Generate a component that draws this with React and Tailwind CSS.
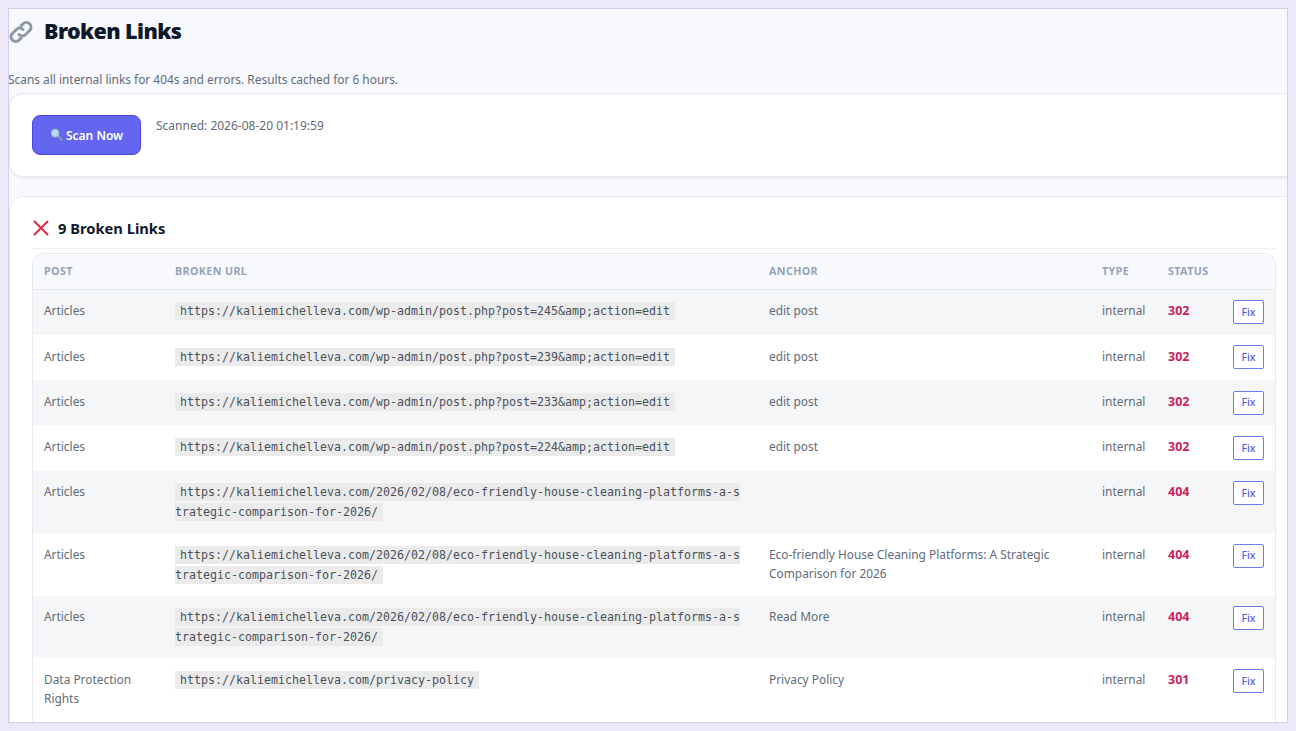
const rows = [
  { post: 'Articles', url: 'https://kaliemichelleva.com/wp-admin/post.php?post=245&amp;action=edit', anchor: 'edit post', status: 302 },
  { post: 'Articles', url: 'https://kaliemichelleva.com/wp-admin/post.php?post=239&amp;action=edit', anchor: 'edit post', status: 302 },
  { post: 'Articles', url: 'https://kaliemichelleva.com/wp-admin/post.php?post=233&amp;action=edit', anchor: 'edit post', status: 302 },
  { post: 'Articles', url: 'https://kaliemichelleva.com/wp-admin/post.php?post=224&amp;action=edit', anchor: 'edit post', status: 302 },
  { post: 'Articles', url: 'https://kaliemichelleva.com/2026/02/08/eco-friendly-house-cleaning-platforms-a-strategic-comparison-for-2026/', anchor: '', status: 404 },
  { post: 'Articles', url: 'https://kaliemichelleva.com/2026/02/08/eco-friendly-house-cleaning-platforms-a-strategic-comparison-for-2026/', anchor: 'Eco-friendly House Cleaning Platforms: A Strategic Comparison for 2026', status: 404 },
  { post: 'Articles', url: 'https://kaliemichelleva.com/2026/02/08/eco-friendly-house-cleaning-platforms-a-strategic-comparison-for-2026/', anchor: 'Read More', status: 404 },
  { post: 'Data Protection Rights', url: 'https://kaliemichelleva.com/privacy-policy', anchor: 'Privacy Policy', status: 301 },
];

function LinkIcon() {
  return (
    <svg width="24" height="24" viewBox="0 0 24 24" fill="none" stroke="#8d9aa5" strokeWidth="3" strokeLinecap="round">
      <path d="M10 14.500a4.600 4.600 0 0 0 6.600 0l4-4a4.600 4.600 0 0 0-6.600-6.600l-2 2" />
      <path d="M14 9.500a4.600 4.600 0 0 0-6.600 0l-4 4a4.600 4.600 0 0 0 6.600 6.600l2-2" />
    </svg>
  );
}

function SearchIcon() {
  return (
    <svg width="13" height="13" viewBox="0 0 14 14" className="mr-[3px] -mt-[4px]">
      <path d="M8 8l4.500 4.500" stroke="#8b95a5" strokeWidth="2.400" strokeLinecap="round" />
      <circle cx="5.500" cy="5.500" r="4" fill="#b4dff0" stroke="#aeb9c6" strokeWidth="1.300" />
    </svg>
  );
}

function CrossIcon() {
  return (
    <svg width="16" height="16" viewBox="0 0 16 16" stroke="#e0264a" strokeWidth="2" strokeLinecap="round">
      <path d="M1.500 1.500l13 13M14.500 1.500l-13 13" />
    </svg>
  );
}

function Row({ row, index }) {
  const td = 'pt-[11.800px] pb-[10.800px] pr-3 align-top';
  return (
    <tr className={index % 2 === 0 ? 'bg-[#f5f6f7]' : 'bg-white'}>
      <td className={`${td} pl-[11px]`}>{row.post}</td>
      <td className={`${td} pl-3`}>
        <code className="break-all bg-[#ebebeb] px-[5px] py-[2px] text-[11.630px] leading-[19px] text-[#4a515b] [font-family:'DejaVu_Sans_Mono',monospace]">
          {row.url}
        </code>
      </td>
      <td className={`${td} pl-3`}>{row.anchor}</td>
      <td className={`${td} pl-3`}>internal</td>
      <td className={`${td} pl-3 text-[12.500px] font-bold text-[#c9245c]`}>{row.status}</td>
      <td className="pt-[10.500px] pr-3 pb-[10.750px] pl-3 align-top">
        <button className="block h-6 w-[31px] rounded-[2px] border border-[#6b7bf0] bg-white text-[10.500px] leading-none font-medium text-[#4f5ee8]">
          Fix
        </button>
      </td>
    </tr>
  );
}

export default function App() {
  return (
    <div className="h-[731px] overflow-hidden bg-[#ede9f9] p-2 text-[11.900px] text-[#626b78] [font-family:'Noto_Sans',sans-serif]">
      <div className="h-[715px] overflow-hidden border border-[#d5cdf0] bg-[#f8f9fc]">
        <h1 className="flex h-[45px] items-center text-[21.500px] font-black tracking-[-0.6px] text-[#0f172a]">
          <LinkIcon />
          <span className="ml-[11px]">Broken Links</span>
        </h1>
        <p className="mt-[16px] -ml-px h-[23px] leading-[19px]">Scans all internal links for 404s and errors. Results cached for 6 hours.</p>

        <div className="flex h-[84px] w-[1300px] items-start rounded-[14px] border border-[#e8eaef] bg-white pt-[21px] pl-[22px] shadow-[0_1px_3px_rgba(0,0,0,0.08)]">
          <button className="flex h-10 w-[109px] items-center justify-center rounded-lg border border-[#4f46e5] bg-[#6366f1] pt-[2px] text-[12px] font-semibold text-white">
            <SearchIcon />
            Scan Now
          </button>
          <span className="mt-px ml-[15px] text-[12px] leading-[19px]">Scanned: 2026-08-20 01:19:59</span>
        </div>

        <div className="mt-[19px] w-[1300px] rounded-t-[14px] border border-[#e8eaef] bg-white pt-[21px] pb-6 pl-[22px]">
          <div className="flex w-[1244px] items-center border-b border-[#eef0f3] pb-[10px] pl-px">
            <CrossIcon />
            <h2 className="ml-[9px] text-[14.700px] leading-[20px] font-bold text-[#0f172a]">9 Broken Links</h2>
          </div>
          <div className="mt-[4px] min-h-[490px] w-[1244px] rounded-t-xl border border-b-0 border-[#e8eaef]">
            <table className="w-full table-fixed border-collapse leading-[19px]">
              <colgroup>
                <col className="w-[130px]" />
                <col className="w-[594px]" />
                <col className="w-[333px]" />
                <col className="w-[66px]" />
                <col className="w-[65px]" />
                <col />
              </colgroup>
              <thead>
                <tr className="h-[35px] border-b border-[#e2e6ee] bg-[#f8f9fc] text-left text-[10.700px] font-bold tracking-[0.4px] text-[#94a3b8] uppercase">
                  <th className="rounded-tl-xl pl-[11px] font-bold">Post</th>
                  <th className="px-3 font-bold">Broken URL</th>
                  <th className="px-3 font-bold">Anchor</th>
                  <th className="px-3 font-bold">Type</th>
                  <th className="px-3 font-bold">Status</th>
                  <th className="rounded-tr-xl px-3" />
                </tr>
              </thead>
              <tbody>
                {rows.map((row, i) => (
                  <Row key={i} row={row} index={i} />
                ))}
              </tbody>
            </table>
          </div>
        </div>
      </div>
    </div>
  );
}
